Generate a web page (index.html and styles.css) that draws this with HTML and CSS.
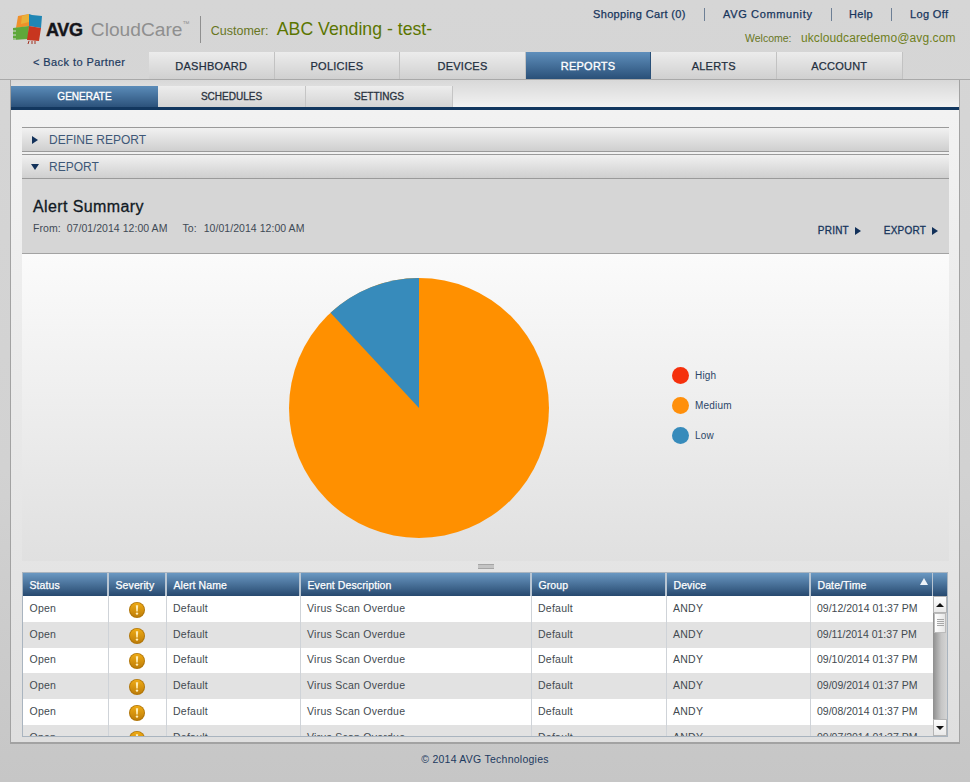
FILE: index.html
```html
<!DOCTYPE html>
<html lang="en">
<head>
<meta charset="utf-8">
<title>AVG CloudCare - Reports</title>
<link rel="stylesheet" href="styles.css">
</head>
<body>
<svg class="defs" width="0" height="0" aria-hidden="true">
  <defs>
    <linearGradient id="warn-fill" x1="0" y1="0" x2="0" y2="1">
      <stop offset="0" stop-color="#eeaa14"/>
      <stop offset="1" stop-color="#c07f0a"/>
    </linearGradient>
  </defs>
  <symbol id="warn" viewBox="0 0 16 16">
    <circle cx="8" cy="8" r="8" fill="#b27608"/>
    <circle cx="8" cy="7.8" r="7" fill="url(#warn-fill)"/>
    <path d="M6.8 3.2h2.4l-.5 6.2H7.3z" fill="#ffeeb8"/>
    <circle cx="8" cy="11.6" r="1.2" fill="#ffeeb8"/>
  </symbol>
</svg>
<header class="top">
  <div class="brand">
    <svg class="logo" width="32" height="30" viewBox="0 0 32 30" aria-hidden="true">
      <path d="M6 2 17 0v12L4 14z" fill="#f0902a"/>
      <path d="M17 0l3 1 10 1-1 12-12-2z" fill="#1f86b4"/>
      <path d="M10 2l7-2v8l-8 2z" fill="#e9b13a"/>
      <path d="M1 14l16-2-1 13-15 1z" fill="#5fa83a"/>
      <path d="M17 12l12 2-2 13-12-1z" fill="#c8361f"/>
      <path d="M0 17h4M0 21h4M0 25h4" stroke="#d9d9d9" stroke-width="1"/>
      <path d="M17 27l-1 3M20 27v3M23 27v3" stroke="#a03020" stroke-width="1"/>
    </svg>
    <span class="avg">AVG</span>
    <span class="cloud">CloudCare<sup class="tm">™</sup></span>
    <span class="customer-label">Customer:</span>
    <span class="customer">ABC Vending - test-</span>
  </div>
  <div class="account">
    <nav class="links">
      <a class="link">Shopping Cart (0)</a>
      <a class="link sep">AVG Community</a>
      <a class="link sep">Help</a>
      <a class="link sep">Log Off</a>
    </nav>
    <div class="welcome"><span class="welcome-label">Welcome:</span><span class="email">ukcloudcaredemo@avg.com</span></div>
  </div>
</header>
<div class="navrow">
  <a class="back">&lt; Back to Partner</a>
  <nav class="tabs">
    <a class="tab">DASHBOARD</a>
    <a class="tab">POLICIES</a>
    <a class="tab">DEVICES</a>
    <a class="tab active">REPORTS</a>
    <a class="tab">ALERTS</a>
    <a class="tab">ACCOUNT</a>
  </nav>
</div>
<main class="panel">
  <div class="subbar">
    <a class="subtab active">GENERATE</a>
    <a class="subtab">SCHEDULES</a>
    <a class="subtab">SETTINGS</a>
  </div>
  <div class="content">
    <div class="section section-first"><span class="tri tri-right"></span>DEFINE REPORT</div>
    <div class="section"><span class="tri tri-down"></span>REPORT</div>
    <div class="summary">
      <div>
        <h1 class="title">Alert Summary</h1>
        <p class="range"><span class="range-key">From:</span>07/01/2014 12:00 AM<span class="range-key range-to">To:</span>10/01/2014 12:00 AM</p>
      </div>
      <div class="actions">
        <a class="action">PRINT<span class="tri-small"></span></a>
        <a class="action">EXPORT<span class="tri-small"></span></a>
      </div>
    </div>
    <div class="chart">
      <svg class="pie" width="262" height="262" viewBox="-131 -131 262 262" role="img" aria-label="Alert severity pie chart">
        <circle r="130" fill="#ff9000"/>
        <path d="M0 0V-130A130 130 0 0 0 -88.5 -95.2Z" fill="#378bbb"/>
      </svg>
      <ul class="legend">
        <li class="legend-item"><span class="dot dot-high"></span>High</li>
        <li class="legend-item"><span class="dot dot-medium"></span>Medium</li>
        <li class="legend-item"><span class="dot dot-low"></span>Low</li>
      </ul>
    </div>
    <div class="splitter"><span class="grip"></span></div>
    <div class="grid">
      <div class="grid-main">
        <table class="alerts">
          <colgroup>
            <col class="c-status"><col class="c-severity"><col class="c-name"><col class="c-event"><col class="c-group"><col class="c-device"><col class="c-date">
          </colgroup>
          <thead>
            <tr><th>Status</th><th>Severity</th><th>Alert Name</th><th>Event Description</th><th>Group</th><th>Device</th><th class="sorted">Date/Time<span class="sort"></span></th></tr>
          </thead>
          <tbody>
            <tr><td>Open</td><td class="sev"><svg class="warn" width="16" height="16"><use href="#warn"/></svg></td><td>Default</td><td>Virus Scan Overdue</td><td>Default</td><td>ANDY</td><td>09/12/2014 01:37 PM</td></tr>
            <tr><td>Open</td><td class="sev"><svg class="warn" width="16" height="16"><use href="#warn"/></svg></td><td>Default</td><td>Virus Scan Overdue</td><td>Default</td><td>ANDY</td><td>09/11/2014 01:37 PM</td></tr>
            <tr><td>Open</td><td class="sev"><svg class="warn" width="16" height="16"><use href="#warn"/></svg></td><td>Default</td><td>Virus Scan Overdue</td><td>Default</td><td>ANDY</td><td>09/10/2014 01:37 PM</td></tr>
            <tr><td>Open</td><td class="sev"><svg class="warn" width="16" height="16"><use href="#warn"/></svg></td><td>Default</td><td>Virus Scan Overdue</td><td>Default</td><td>ANDY</td><td>09/09/2014 01:37 PM</td></tr>
            <tr><td>Open</td><td class="sev"><svg class="warn" width="16" height="16"><use href="#warn"/></svg></td><td>Default</td><td>Virus Scan Overdue</td><td>Default</td><td>ANDY</td><td>09/08/2014 01:37 PM</td></tr>
            <tr><td>Open</td><td class="sev"><svg class="warn" width="16" height="16"><use href="#warn"/></svg></td><td>Default</td><td>Virus Scan Overdue</td><td>Default</td><td>ANDY</td><td>09/07/2014 01:37 PM</td></tr>
          </tbody>
        </table>
      </div>
      <div class="scroll">
        <div class="scroll-head"></div>
        <div class="scroll-btn"><span class="arrow-up"></span></div>
        <div class="scroll-track">
          <div class="scroll-thumb"><span class="thumb-lines"></span></div>
        </div>
        <div class="scroll-btn"><span class="arrow-down"></span></div>
      </div>
    </div>
  </div>
</main>
<footer class="footer">© 2014 AVG Technologies</footer>
</body>
</html>
```
FILE: styles.css
```css
* { box-sizing: border-box; }
html, body { margin: 0; padding: 0; }
body {
  width: 970px;
  height: 782px;
  overflow: hidden;
  background: linear-gradient(#d6d6d6, #d2d2d2 60%, #c6c6c6);
  font-family: "Liberation Sans", Arial, sans-serif;
  color: #1d3a5f;
}
a { color: inherit; text-decoration: none; }
.defs { position: absolute; }

.top { height: 52px; display: flex; justify-content: space-between; }
.brand { display: flex; align-items: flex-start; padding: 14px 0 0 12px; }
.logo { flex: none; }
.avg {
  margin: 5px 0 0 2px;
  font-size: 18px;
  line-height: 22px;
  font-weight: 700;
  color: #15151a;
  letter-spacing: -0.3px;
  -webkit-text-stroke: 0.4px #15151a;
}
.cloud {
  margin: 2px 0 0 8px;
  width: 110px;
  height: 27px;
  border-right: 1px solid #8f8f8f;
  font-size: 19.2px;
  line-height: 28px;
  color: #8f8f8f;
  white-space: nowrap;
}
.tm { font-size: 7px; vertical-align: 10px; line-height: 0; }
.customer-label { margin: 9px 0 0 10px; width: 66px; font-size: 12.5px; line-height: 16px; color: #68761f; }
.customer { margin: 4px 0 0 0; font-size: 17.7px; line-height: 22px; color: #5b7500; white-space: nowrap; }

.account { width: 377px; padding: 7px 0 0; }
.links { display: flex; height: 16px; }
.link { font-size: 11px; line-height: 15px; letter-spacing: 0.35px; color: #17355c; -webkit-text-stroke: 0.25px #17355c; white-space: nowrap; }
.links .link:nth-child(1) { width: 111px; }
.links .link:nth-child(2) { width: 127px; padding-left: 19px; letter-spacing: 0.65px; }
.links .link:nth-child(3) { width: 60px; padding-left: 18px; }
.links .link:nth-child(4) { padding-left: 19px; }
.sep { position: relative; }
.sep::before { content: ""; position: absolute; left: 0; top: 1px; width: 1px; height: 13px; background: #6d7f95; }
.welcome { display: flex; margin: 7px 0 0 152px; line-height: 16px; white-space: nowrap; }
.welcome-label { width: 56px; font-size: 10.5px; color: #68761f; }
.email { font-size: 12px; letter-spacing: 0.1px; color: #6f7f1d; }

.navrow { display: flex; height: 28px; border-bottom: 1px solid #a9a9a9; }
.back { width: 149px; padding: 3px 0 0 33px; font-size: 11px; line-height: 14px; letter-spacing: 0.42px; color: #1d3a5f; -webkit-text-stroke: 0.2px #1d3a5f; white-space: nowrap; }
.tabs { display: flex; }
.tab {
  width: 125.6px;
  text-align: center;
  font-size: 11px;
  line-height: 28px;
  letter-spacing: 0.25px;
  color: #232f3e;
  border-right: 1px solid #c2c2c2;
  background: linear-gradient(#ececec, #d0d0d0);
  -webkit-text-stroke: 0.25px #232f3e;
}
.tab.active { color: #fff; -webkit-text-stroke: 0.35px #fff; background: linear-gradient(#5f8fbc, #2a5078); border-right-color: #2a5078; }

.panel {
  width: 950px;
  height: 664px;
  margin: 0 0 0 10px;
  border: 1px solid #a2a2a2;
  border-width: 0 1px 2px 1px;
  background: linear-gradient(#f3f3f3, #dfdfdf);
}
.subbar { height: 30px; padding-top: 6px; display: flex; border-bottom: 3px solid #12375f; background: linear-gradient(#d8d8d8, #f2f2f2); }
.subtab {
  width: 148px;
  text-align: center;
  font-size: 10px;
  line-height: 21px;
  color: #2a3340;
  border-right: 1px solid #c5c5c5;
  background: linear-gradient(#ededed, #d4d4d4);
  -webkit-text-stroke: 0.3px #2a3340;
}
.subtab.active { width: 147px; color: #fff; -webkit-text-stroke: 0.35px #fff; background: linear-gradient(#5b8cb9, #2c527b); border-right: 0; }
.subtab:last-child { width: 147px; }

.content { padding: 17px 0 0 11px; width: 938px; }
.section {
  height: 25px;
  margin-top: 2px;
  display: flex;
  align-items: center;
  padding-left: 10px;
  font-size: 12px;
  color: #3e5877;
  border-top: 1px solid #9a9a9a;
  border-bottom: 1px solid #9a9a9a;
  background: linear-gradient(#f1f1f1, #cfcfcf);
}
.section-first { margin-top: 0; }
.tri { width: 0; height: 0; border-style: solid; border-color: transparent; }
.tri-right { margin-right: 11px; border-width: 4px 0 4px 6px; border-left-color: #12315a; }
.tri-down { margin: 0 10px 0 -1px; border-width: 6px 4px 0 4px; border-top-color: #12315a; }

.summary {
  height: 75px;
  display: flex;
  justify-content: space-between;
  padding: 18px 11px 0 11px;
  background: #d6d6d6;
  border-bottom: 1px solid #a3a3a3;
}
.title { margin: 0; font-size: 16px; line-height: 20px; font-weight: 400; letter-spacing: 0.4px; color: #111a24; -webkit-text-stroke: 0.3px #111a24; }
.range { margin: 4px 0 0; font-size: 10.5px; line-height: 14px; letter-spacing: 0.05px; color: #3f4a55; white-space: nowrap; }
.range-key { margin-right: 6px; }
.range-to { margin-left: 15px; margin-right: 7px; }
.actions { display: flex; gap: 23px; padding-top: 27px; }
.action { font-size: 10px; line-height: 14px; letter-spacing: 0.2px; color: #17355c; -webkit-text-stroke: 0.3px #17355c; white-space: nowrap; }
.tri-small { display: inline-block; width: 0; height: 0; margin-left: 6px; border-style: solid; border-color: transparent; border-width: 4px 0 4px 6.5px; border-left-color: #12315a; vertical-align: -1px; }

.chart {
  height: 307px;
  display: flex;
  align-items: center;
  padding-left: 266px;
  background: linear-gradient(#fbfbfb, #e0e0e0);
}
.pie { flex: none; margin-top: 1px; }
.legend { list-style: none; margin: -5px 0 0 122px; padding: 0; display: flex; flex-direction: column; gap: 12px; }
.legend-item { display: flex; align-items: center; height: 18px; font-size: 10px; letter-spacing: 0.2px; color: #2b4668; }
.dot { width: 17px; height: 17px; border-radius: 50%; margin-right: 6px; }
.dot-high { background: #f5300c; }
.dot-medium { background: #ff8f0a; }
.dot-low { background: #378bbb; }

.splitter { height: 11px; display: flex; align-items: center; justify-content: center; }
.grip { width: 16px; height: 5px; border-top: 1px solid #a5a5a5; border-bottom: 1px solid #a5a5a5; background: #c4c4c4; }

.grid { height: 165px; width: 926px; display: flex; border: 1px solid #a9b4bf; background: #fff; overflow: hidden; }
.grid-main { width: 910px; flex: none; overflow: hidden; }
.alerts { border-collapse: collapse; table-layout: fixed; width: 910px; }
.c-status { width: 85px; }
.c-severity { width: 58px; }
.c-name { width: 134px; }
.c-event { width: 231px; }
.c-group { width: 135px; }
.c-device { width: 144px; }
.c-date { width: 123px; }
.alerts th {
  height: 23px;
  padding: 0 0 0 6.5px;
  text-align: left;
  font-size: 10.5px;
  font-weight: 400;
  letter-spacing: 0.1px;
  color: #fff;
  -webkit-text-stroke: 0.25px #fff;
  background: linear-gradient(#6a98c2, #27496f);
  border-right: 2px solid #b9c6d3;
}
.alerts th.sorted { position: relative; }
.sort { position: absolute; right: 4px; top: 5px; width: 0; height: 0; border-style: solid; border-color: transparent; border-width: 0 4px 7px 4px; border-bottom-color: #eef3f8; }
.alerts td {
  height: 25.75px;
  padding: 0 0 2px 6.5px;
  font-size: 10.5px;
  letter-spacing: 0.25px;
  color: #424a50;
  white-space: nowrap;
  border-right: 1px solid #cfd3d8;
}
.alerts td:last-child { letter-spacing: 0; }
.alerts tbody tr:nth-child(even) td { background: #e2e2e2; }
.alerts td.sev { padding: 2px 0 0; text-align: center; }
.warn { display: block; margin: 0 auto; }

.scroll { flex: 1; display: flex; flex-direction: column; background: #c9c9c9; }
.scroll-head { height: 23px; flex: none; background: linear-gradient(#6a98c2, #27496f); }
.scroll-btn { height: 17px; flex: none; display: flex; align-items: center; justify-content: center; background: linear-gradient(#fdfdfd, #e9e9e9); border: 1px solid #b5b5b5; }
.arrow-up { width: 0; height: 0; border-style: solid; border-color: transparent; border-width: 0 4px 4px 4px; border-bottom-color: #111; }
.arrow-down { width: 0; height: 0; border-style: solid; border-color: transparent; border-width: 4px 4px 0 4px; border-top-color: #111; }
.scroll-track { flex: 1; background: linear-gradient(90deg, #8e8e8e, #c6c6c6 60%, #d4d4d4); }
.scroll-thumb { height: 20px; margin: 0 1px; display: flex; align-items: center; justify-content: center; background: linear-gradient(90deg, #fff, #e6e6e6); border: 1px solid #bbb; }
.thumb-lines { width: 7px; height: 8px; background: repeating-linear-gradient(#a7a7a7 0 1px, transparent 1px 2px); }

.footer { padding-top: 8px; text-align: center; font-size: 10.5px; line-height: 14px; letter-spacing: 0.25px; color: #1d3a5f; }
```
